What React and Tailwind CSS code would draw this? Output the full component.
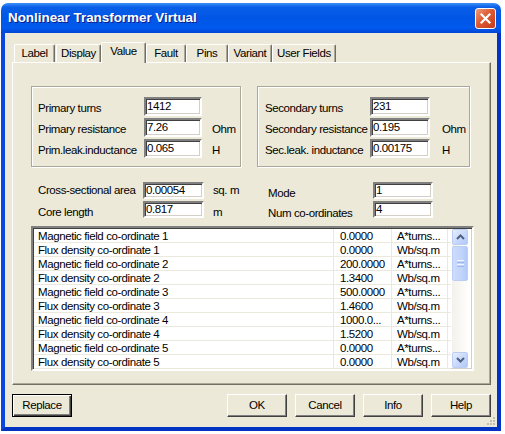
import React from 'react';

const tabs = [
  { label: 'Label', w: 'w-[41px] mr-[1px]' },
  { label: 'Display', w: 'w-[45px]' },
  { label: 'Value', w: 'w-[45px]', active: true },
  { label: 'Fault', w: 'w-[40px]' },
  { label: 'Pins', w: 'w-[42px]' },
  { label: 'Variant', w: 'w-[44px]' },
  { label: 'User Fields', w: 'w-[64px]' },
];

const coords = [
  ['Magnetic field co-ordinate 1', '0.0000', 'A*turns...'],
  ['Flux density co-ordinate 1', '0.0000', 'Wb/sq.m'],
  ['Magnetic field co-ordinate 2', '200.0000', 'A*turns...'],
  ['Flux density co-ordinate 2', '1.3400', 'Wb/sq.m'],
  ['Magnetic field co-ordinate 3', '500.0000', 'A*turns...'],
  ['Flux density co-ordinate 3', '1.4600', 'Wb/sq.m'],
  ['Magnetic field co-ordinate 4', '1000.0...', 'A*turns...'],
  ['Flux density co-ordinate 4', '1.5200', 'Wb/sq.m'],
  ['Magnetic field co-ordinate 5', '0.0000', 'A*turns...'],
  ['Flux density co-ordinate 5', '0.0000', 'Wb/sq.m'],
];

// sunken edit box
const Field = ({ value, w }) => (
  <div
    className={`h-full ${w} shrink-0 bg-white border-2 border-t-[#808080] border-l-[#808080] border-b-white border-r-white shadow-[inset_1px_1px_0_#404040,inset_-1px_-1px_0_#d4d0c8] pl-[1px] flex items-center leading-none`}
  >
    {value}
  </div>
);

const GroupRow = ({ label, value, unit, labelW, fieldW, unitMl }) => (
  <div className="flex items-center h-[19px]">
    <span className={`${labelW} shrink-0 mt-[4px] leading-none whitespace-nowrap`}>{label}</span>
    <Field value={value} w={fieldW} />
    <span className={`${unitMl} mt-[4px] leading-none`}>{unit}</span>
  </div>
);

const Chevron = ({ up }) => (
  <svg width="9" height="6" viewBox="0 0 9 6">
    <polyline
      points={up ? '1,5 4.5,1.5 8,5' : '1,1 4.5,4.5 8,1'}
      fill="none"
      stroke="#4d6185"
      strokeWidth="2"
    />
  </svg>
);

const ScrollBtn = ({ up }) => (
  <div className="h-[16px] w-[16px] rounded-[2px] border border-[#bccdf5] bg-[linear-gradient(135deg,#e6eefc,#c5d6fb_60%,#b1c8f8)] flex items-center justify-center">
    <Chevron up={up} />
  </div>
);

const Button = ({ children, isDefault }) => (
  <button
    className={`h-[23px] w-[60px] bg-[#ece9d8] leading-none ${
      isDefault
        ? 'border border-black shadow-[inset_1px_1px_0_#fff,inset_-1px_-1px_0_#404040,inset_-2px_-2px_0_#808080]'
        : 'border border-t-white border-l-white border-r-[#404040] border-b-[#404040] shadow-[inset_-1px_-1px_0_#808080]'
    }`}
  >
    {children}
  </button>
);

export default function App() {
  return (
    <div className="w-[505px] h-[434px] bg-white overflow-hidden font-['Liberation_Sans',Arial,sans-serif] text-[11.5px] tracking-[-0.4px] text-black">
      <div className="w-[500px] ml-[1px] mt-[3px] rounded-t-[7px] overflow-hidden">
        {/* title bar */}
        <div className="h-[30px] flex items-center pl-[7px] pr-[5px] bg-[linear-gradient(180deg,#3d8ff9_0%,#0a5fe8_14%,#0055e5_50%,#005aee_82%,#0046d6_100%)]">
          <span className="text-white font-bold text-[13.4px] tracking-normal [text-shadow:1px_1px_#0a1d8a]">
            Nonlinear Transformer Virtual
          </span>
          <div className="ml-auto w-[21px] h-[21px] rounded-[3px] border border-white bg-[linear-gradient(135deg,#ee9a7c,#df5a33_45%,#c23b1b)] flex items-center justify-center">
            <svg width="11" height="11" viewBox="0 0 11 11">
              <path d="M1.5 1.5 L9.5 9.5 M9.5 1.5 L1.5 9.5" stroke="#fff" strokeWidth="2.2" strokeLinecap="square" />
            </svg>
          </div>
        </div>

        {/* body */}
        <div className="relative bg-[#ece9d8] border-l-4 border-r-4 border-b-4 border-l-[#0b47de] border-r-[#0034c8] border-b-[#0033c2] pt-[9px] pl-[7px] pr-[6px] pb-[10px]">
          {/* tabs */}
          <div className="flex items-end h-[20px] pl-[2px]">
            {tabs.map((t) => (
              <div
                key={t.label}
                className={`${t.w} flex items-center justify-center whitespace-nowrap border-t border-l border-white border-r border-r-[#716f64] shadow-[inset_-1px_0_0_#aca899] rounded-t-[2px] bg-[#ece9d8] ${
                  t.active ? 'h-[21px] -mb-px relative z-10 pb-[2px]' : 'h-[18px]'
                }`}
              >
                {t.label}
              </div>
            ))}
          </div>

          {/* tab page */}
          <div className="h-[323px] border border-t-white border-l-white border-r-[#716f64] border-b-[#716f64] shadow-[inset_-1px_-1px_0_#aca899] pl-[18px] pt-[23px]">
            <div className="flex gap-[16px]">
              <div className="w-[210px] h-[81px] border border-[#aca899] shadow-[inset_1px_1px_0_#fff,1px_1px_0_#fff] pl-[6px] pt-[10px] flex flex-col gap-[2px]">
                <GroupRow label="Primary turns" value="1412" labelW="w-[106px]" fieldW="w-[58px]" unitMl="ml-[10px]" />
                <GroupRow label="Primary resistance" value="7.26" unit="Ohm" labelW="w-[106px]" fieldW="w-[58px]" unitMl="ml-[10px]" />
                <GroupRow label="Prim.leak.inductance" value="0.065" unit="H" labelW="w-[106px]" fieldW="w-[58px]" unitMl="ml-[10px]" />
              </div>
              <div className="w-[213px] h-[81px] border border-[#aca899] shadow-[inset_1px_1px_0_#fff,1px_1px_0_#fff] pl-[7px] pt-[10px] flex flex-col gap-[2px]">
                <GroupRow label="Secondary turns" value="231" labelW="w-[105px]" fieldW="w-[60px]" unitMl="ml-[12px]" />
                <GroupRow label="Secondary resistance" value="0.195" unit="Ohm" labelW="w-[105px]" fieldW="w-[60px]" unitMl="ml-[12px]" />
                <GroupRow label="Sec.leak. inductance" value="0.00175" unit="H" labelW="w-[105px]" fieldW="w-[60px]" unitMl="ml-[12px]" />
              </div>
            </div>

            {/* core settings */}
            <div className="flex ml-[7px] mt-[15px]">
              <div className="w-[230px] flex flex-col gap-[2px]">
                <div className="flex items-center h-[17px]">
                  <span className="w-[105px] shrink-0 leading-none whitespace-nowrap">Cross-sectional area</span>
                  <Field value="0.00054" w="w-[61px]" />
                  <span className="ml-[9px] leading-none">sq. m</span>
                </div>
                <div className="flex items-center h-[17px]">
                  <span className="w-[105px] shrink-0 mt-[6px] leading-none">Core length</span>
                  <Field value="0.817" w="w-[61px]" />
                  <span className="ml-[9px] mt-[6px] leading-none">m</span>
                </div>
              </div>
              <div className="flex flex-col gap-[2px]">
                <div className="flex items-center h-[17px]">
                  <span className="w-[105px] shrink-0 mt-[6px] leading-none">Mode</span>
                  <Field value="1" w="w-[60px]" />
                </div>
                <div className="flex items-center h-[17px]">
                  <span className="w-[105px] shrink-0 mt-[8px] leading-none whitespace-nowrap">Num co-ordinates</span>
                  <Field value="4" w="w-[60px]" />
                </div>
              </div>
            </div>

            {/* coordinate list */}
            <div className="mt-[8px] w-[443px] h-[145px] bg-white border-2 border-t-[#808080] border-l-[#808080] border-b-white border-r-white shadow-[inset_1px_1px_0_#404040,inset_-1px_-1px_0_#d4d0c8] pl-[1px] pt-[1px] pr-[4px] flex">
              <div className="w-[418px]">
                {coords.map(([name, val, unit]) => (
                  <div key={name} className="flex h-[14px] border-b border-[#ebe8dc] leading-[14px] whitespace-nowrap">
                    <div className="w-[300px] pl-[4px] border-r border-[#ebe8dc]">{name}</div>
                    <div className="w-[58px] pl-[6px] border-r border-[#ebe8dc]">{val}</div>
                    <div className="w-[56px] pl-[5px] border-r border-[#ebe8dc]">{unit}</div>
                  </div>
                ))}
              </div>
              <div className="ml-[1px] w-[16px] h-[139px] flex flex-col bg-[linear-gradient(90deg,#f3f1ec,#fefefb)]">
                <ScrollBtn up />
                <div className="h-[35px] mt-[1px] rounded-[2px] border border-[#bccdf5] bg-[linear-gradient(90deg,#cddcfd,#c1d4fb_60%,#b4c9f8)] flex flex-col items-center justify-center gap-[1px]">
                  <div className="w-[7px] h-[1px] bg-[#eef4fe]" />
                  <div className="w-[7px] h-[1px] bg-[#9db7f2]" />
                  <div className="w-[7px] h-[1px] bg-[#eef4fe]" />
                  <div className="w-[7px] h-[1px] bg-[#9db7f2]" />
                </div>
                <div className="flex-1" />
                <ScrollBtn />
              </div>
            </div>
          </div>

          {/* buttons */}
          <div className="flex mt-[9px] gap-[8px]">
            <Button isDefault>Replace</Button>
            <div className="flex-1" />
            <Button>OK</Button>
            <Button>Cancel</Button>
            <Button>Info</Button>
            <Button>Help</Button>
          </div>

          {/* size grip */}
          <svg className="absolute right-[1px] bottom-[1px]" width="10" height="10" viewBox="0 0 10 10">
            {[[7, 1], [4, 4], [7, 4], [1, 7], [4, 7], [7, 7]].map(([x, y]) => (
              <rect key={`${x}-${y}`} x={x} y={y} width="2" height="2" fill="#c2bfb1" />
            ))}
          </svg>
        </div>
      </div>
    </div>
  );
}
